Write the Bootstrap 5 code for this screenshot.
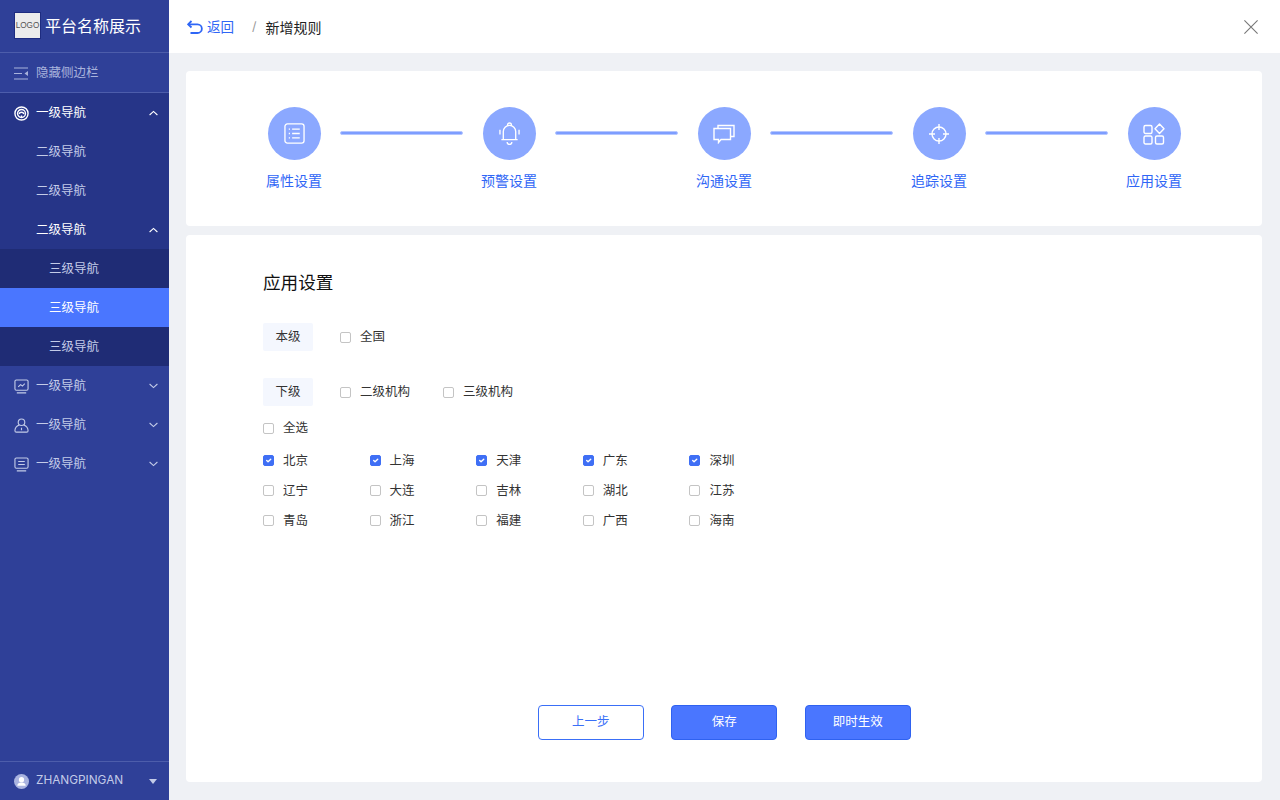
<!DOCTYPE html>
<html lang="zh">
<head>
  <meta charset="UTF-8">
  <meta name="viewport" content="width=device-width, initial-scale=1.0">
  <title>新增规则</title>
  <link href="https://cdn.jsdelivr.net/npm/bootstrap@5.3.3/dist/css/bootstrap.min.css" rel="stylesheet">
  <script src="https://cdn.jsdelivr.net/npm/bootstrap@5.3.3/dist/js/bootstrap.bundle.min.js"></script>
  <style>
    html, body { height: 100%; overflow: hidden; }
    body { font-family: "Inter", "Noto Sans CJK SC", sans-serif; font-size: 12.5px; background: #eff1f5; color: #222; }
    svg { display: block; flex: none; }

    .side { width: 169px; flex: none; background: #2f4098; color: #c3cbe8; }
    .side-logo { height: 53px; padding: 0 0 1px 14px; gap: 4px; border-bottom: 1px solid #4d5dab; color: #fff; font-size: 16px; }
    .logo-box { width: 27px; height: 27px; background: #ececec; border: 1px solid #1e2c80; color: #555; font-size: 8.2px; line-height: 25px; text-align: center; font-family: "Liberation Sans", sans-serif; }
    .side-toggle { height: 40px; padding: 1px 0 0 14px; gap: 8px; border-bottom: 1px solid #4d5dab; color: #a9b3dc; }
    .side-row { height: 39px; padding: 1px 11px 0 14px; gap: 7px; color: #c3cbe8; }
    .side-open { background: #263588; }
    .side-row.top-open, .side-row.sub-open { color: #fff; }
    .lvl2 { padding-left: 36px; }
    .lvl3 { padding-left: 49px; background: #1f2c75; }
    .lvl3.on { background: #4a76ff; color: #fff; }
    .side-foot { height: 39px; padding: 0 12px 0 14px; gap: 7px; border-top: 1px solid #4d5dab; color: #c3cbe8; font-size: 11.8px; }
    .foot-caret { width: 0; height: 0; border-left: 4.5px solid transparent; border-right: 4.5px solid transparent; border-top: 5px solid #c3cbe8; }

    .topbar { height: 53px; flex: none; background: #fff; padding: 1px 22px 0 18px; }
    .back-link { color: #2f66f6; font-size: 13.5px; gap: 4px; text-decoration: none; }
    .crumb-sep { color: #999; margin: 0 9px 0 18px; }
    .crumb-now { font-size: 14px; color: #222; }

    .content { padding: 18px 18px 18px 17px; gap: 9px; min-height: 0; }
    .panel { background: #fff; border-radius: 4px; }
    .steps { height: 155px; flex: none; padding: 36px 0 0 80px; }
    .step { width: 56px; flex: none; color: #2f66f6; font-size: 14px; line-height: 20px; }
    .step-dot { width: 53px; height: 53px; border-radius: 50%; background: #8ba8ff; margin-bottom: 11px; }
    .step-line { width: 123px; height: 4px; margin: 24px 18px 0; flex: none; border-radius: 2px; background: #7d9dff; border: 1px solid #b4c6ff; }

    .form-panel { padding: 36px 0 42px 77px; min-height: 0; }
    .form-title { font-size: 17.6px; line-height: 24px; font-weight: 400; margin: 0 0 28px; color: #111; }
    .scope-tag { width: 50px; height: 28px; line-height: 28px; text-align: center; background: #f4f7fe; border-radius: 2px; margin-right: 27px; color: #333; }
    .scope-row { height: 28px; margin-bottom: 27px; }
    .scope-row.last { margin-bottom: 9px; }
    .pick { display: flex; align-items: center; gap: 9px; margin: 0; line-height: 18px; color: #333; }
    .pick .form-check-input { width: 11px; height: 11px; margin: 0; border: 1px solid #c4c4c4; border-radius: 2px; flex: none; }
    .pick .form-check-input:checked { background-color: #3f6ff5; border-color: #3f6ff5; }
    .pick-gap { margin-right: 33px; }
    .all-row { height: 26px; margin-bottom: 4.5px; }
    .city-grid { display: grid; grid-template-columns: repeat(5, 106.6px); grid-auto-rows: 30px; align-items: center; }
    .btn-row { gap: 27.5px; margin: auto 0 0 -76.4px; justify-content: center; }
    .act { width: 106px; height: 35px; padding: 0; font-size: 12.5px; border-radius: 4px; }
    .btn-primary.act { background: #4a76ff; border-color: #2f62f0; color: #fff; }
    .btn-outline-primary.act { background: #fff; border-color: #3a6ff7; color: #3a6ff7; }
  </style>
</head>
<body>
  <div class="d-flex h-100">
    <!-- sidebar -->
    <aside class="side d-flex flex-column">
      <div class="side-logo d-flex align-items-center">
        <div class="logo-box">LOGO</div>
        <span>平台名称展示</span>
      </div>
      <div class="side-toggle d-flex align-items-center">
        <svg width="14" height="13" viewBox="0 0 14 13" fill="none" stroke="currentColor" stroke-width="1.2"><path d="M0 1h14M0 6.500h8M0 12h14"/><path d="M14 4v5l-3.500-2.500z" fill="currentColor" stroke="none"/></svg>
        <span>隐藏侧边栏</span>
      </div>
      <div class="side-open">
        <div class="side-row top-open d-flex align-items-center">
          <svg width="15" height="15" viewBox="0 0 16 16" fill="none" stroke="#fff" stroke-width="1.5"><circle cx="8" cy="8" r="7"/><circle cx="8" cy="8" r="4.200"/><path d="M5.500 8.500a2.600 2.600 0 0 1 5 0M8 12v-2"/></svg>
          <span class="flex-grow-1">一级导航</span>
          <svg width="9" height="6" viewBox="0 0 9 6" fill="none" stroke="#fff" stroke-width="1.100"><path d="M.6 5l3.900-3.600L8.400 5"/></svg>
        </div>
        <div class="side-row lvl2 d-flex align-items-center">二级导航</div>
        <div class="side-row lvl2 d-flex align-items-center">二级导航</div>
        <div class="side-row lvl2 sub-open d-flex align-items-center">
          <span class="flex-grow-1">二级导航</span>
          <svg width="9" height="6" viewBox="0 0 9 6" fill="none" stroke="#fff" stroke-width="1.100"><path d="M.6 5l3.900-3.600L8.400 5"/></svg>
        </div>
        <div class="side-row lvl3 d-flex align-items-center">三级导航</div>
        <div class="side-row lvl3 on d-flex align-items-center">三级导航</div>
        <div class="side-row lvl3 d-flex align-items-center">三级导航</div>
      </div>
      <div class="side-row d-flex align-items-center">
        <svg width="15" height="15" viewBox="0 0 16 16" fill="none" stroke="currentColor" stroke-width="1.200"><rect x="1" y="1" width="14" height="11" rx="1.500"/><path d="M4.500 8.500l2.500-2.500 2 1.500 2.500-2.500M3 14.800h10"/></svg>
        <span class="flex-grow-1">一级导航</span>
        <svg width="9" height="6" viewBox="0 0 9 6" fill="none" stroke="currentColor" stroke-width="1.100"><path d="M.6 1l3.900 3.600L8.400 1"/></svg>
      </div>
      <div class="side-row d-flex align-items-center">
        <svg width="15" height="15" viewBox="0 0 16 16" fill="none" stroke="currentColor" stroke-width="1.200"><circle cx="8" cy="4.500" r="3.500"/><path d="M5.500 7.500C3 8.500 1 11 1 13.500c0 1 .6 1.500 1.500 1.500h11c.9 0 1.500-.5 1.500-1.500 0-2.500-2-5-4.500-6M8 10.500V13"/></svg>
        <span class="flex-grow-1">一级导航</span>
        <svg width="9" height="6" viewBox="0 0 9 6" fill="none" stroke="currentColor" stroke-width="1.100"><path d="M.6 1l3.900 3.600L8.400 1"/></svg>
      </div>
      <div class="side-row d-flex align-items-center">
        <svg width="15" height="15" viewBox="0 0 16 16" fill="none" stroke="currentColor" stroke-width="1.200"><rect x="1" y="1" width="14" height="11" rx="1.500"/><path d="M4.500 4.800h7M4.500 8h7M3 14.800h10"/></svg>
        <span class="flex-grow-1">一级导航</span>
        <svg width="9" height="6" viewBox="0 0 9 6" fill="none" stroke="currentColor" stroke-width="1.100"><path d="M.6 1l3.900 3.600L8.400 1"/></svg>
      </div>
      <div class="side-foot d-flex align-items-center mt-auto">
        <svg width="15" height="15" viewBox="0 0 16 16"><circle cx="8" cy="8" r="8" fill="#aab4e0"/><circle cx="8" cy="6" r="2.800" fill="#fff"/><path d="M3.500 12.500c0-2.500 2-3.500 4.500-3.500s4.500 1 4.500 3.500z" fill="#fff"/></svg>
        <span class="flex-grow-1">ZHANGPINGAN</span>
        <span class="foot-caret"></span>
      </div>
    </aside>

    <!-- main -->
    <main class="flex-grow-1 d-flex flex-column" style="min-width:0">
      <header class="topbar d-flex align-items-center">
        <a class="back-link d-flex align-items-center" href="#">
          <svg width="16" height="15" viewBox="0 0 16 15" fill="none" stroke="#2f66f6" stroke-width="1.800"><path d="M4.500 1L1.200 4.300l3.300 3.200"/><path d="M1.500 4.300h9a4.300 4.300 0 0 1 0 8.700H3.500"/></svg>
          <span>返回</span>
        </a>
        <span class="crumb-sep">/</span>
        <span class="crumb-now flex-grow-1">新增规则</span>
        <svg width="14" height="14" viewBox="0 0 14 14" fill="none" stroke="#777" stroke-width="1.100"><path d="M.4.400l13.200 13.200M13.600.400L.4 13.600"/></svg>
      </header>

      <div class="content flex-grow-1 d-flex flex-column">
        <section class="panel steps d-flex align-items-start">
          <div class="step d-flex flex-column align-items-center text-nowrap">
            <div class="step-dot d-flex align-items-center justify-content-center">
              <svg width="21" height="21" viewBox="0 0 22 22" fill="none" stroke="#fff" stroke-width="1.400"><rect x="1" y="1" width="20" height="20" rx="2.500"/><path d="M8.500 6.500h8M8.500 11h8M8.500 15.500h8M5 6.500h1.300M5 11h1.300M5 15.500h1.300"/></svg>
            </div>
            <span>属性设置</span>
          </div>
          <div class="step-line"></div>
          <div class="step d-flex flex-column align-items-center text-nowrap">
            <div class="step-dot d-flex align-items-center justify-content-center">
              <svg width="21" height="23" viewBox="0 0 22 24" fill="none" stroke="#fff" stroke-width="1.400"><path d="M4.500 18.500V10a6.500 6.500 0 0 1 13 0v8.500zM2.500 18.500h17M9 3.800V3a2 2 0 0 1 4 0v.8M8.500 21a2.500 2.500 0 0 0 5 0M1 8v5M21 8v5"/></svg>
            </div>
            <span>预警设置</span>
          </div>
          <div class="step-line"></div>
          <div class="step d-flex flex-column align-items-center text-nowrap">
            <div class="step-dot d-flex align-items-center justify-content-center">
              <svg width="22" height="20" viewBox="0 0 22 20" fill="none" stroke="#fff" stroke-width="1.400"><path d="M5 4V1.500h16v11h-3"/><path d="M1 4.500h16.500v11H8L5.500 18.500V15.500H1z"/></svg>
            </div>
            <span>沟通设置</span>
          </div>
          <div class="step-line"></div>
          <div class="step d-flex flex-column align-items-center text-nowrap">
            <div class="step-dot d-flex align-items-center justify-content-center">
              <svg width="22" height="22" viewBox="0 0 22 22" fill="none" stroke="#fff" stroke-width="1.400"><circle cx="11" cy="11" r="7"/><path d="M11 1v6M11 15v6M1 11h6M15 11h6"/></svg>
            </div>
            <span>追踪设置</span>
          </div>
          <div class="step-line"></div>
          <div class="step d-flex flex-column align-items-center text-nowrap">
            <div class="step-dot d-flex align-items-center justify-content-center">
              <svg width="22" height="22" viewBox="0 0 22 22" fill="none" stroke="#fff" stroke-width="1.400"><rect x="1" y="2.500" width="8" height="8" rx="1.500"/><rect x="1" y="13" width="8" height="8" rx="1.500"/><rect x="12.500" y="13" width="8" height="8" rx="1.500"/><path d="M16.500 1l4.500 4.700-4.500 4.700L12 5.700z" stroke-linejoin="round"/></svg>
            </div>
            <span>应用设置</span>
          </div>
        </section>

        <section class="panel form-panel flex-grow-1 d-flex flex-column">
          <h2 class="form-title">应用设置</h2>
          <div class="scope-row d-flex align-items-center">
            <span class="scope-tag">本级</span>
            <label class="pick"><input class="form-check-input" type="checkbox">全国</label>
          </div>
          <div class="scope-row last d-flex align-items-center">
            <span class="scope-tag">下级</span>
            <label class="pick pick-gap"><input class="form-check-input" type="checkbox">二级机构</label>
            <label class="pick"><input class="form-check-input" type="checkbox">三级机构</label>
          </div>
          <div class="all-row d-flex align-items-center">
            <label class="pick"><input class="form-check-input" type="checkbox">全选</label>
          </div>
          <div class="city-grid">
            <label class="pick"><input class="form-check-input" type="checkbox" checked>北京</label>
            <label class="pick"><input class="form-check-input" type="checkbox" checked>上海</label>
            <label class="pick"><input class="form-check-input" type="checkbox" checked>天津</label>
            <label class="pick"><input class="form-check-input" type="checkbox" checked>广东</label>
            <label class="pick"><input class="form-check-input" type="checkbox" checked>深圳</label>
            <label class="pick"><input class="form-check-input" type="checkbox">辽宁</label>
            <label class="pick"><input class="form-check-input" type="checkbox">大连</label>
            <label class="pick"><input class="form-check-input" type="checkbox">吉林</label>
            <label class="pick"><input class="form-check-input" type="checkbox">湖北</label>
            <label class="pick"><input class="form-check-input" type="checkbox">江苏</label>
            <label class="pick"><input class="form-check-input" type="checkbox">青岛</label>
            <label class="pick"><input class="form-check-input" type="checkbox">浙江</label>
            <label class="pick"><input class="form-check-input" type="checkbox">福建</label>
            <label class="pick"><input class="form-check-input" type="checkbox">广西</label>
            <label class="pick"><input class="form-check-input" type="checkbox">海南</label>
          </div>
          <div class="btn-row d-flex">
            <button type="button" class="btn btn-outline-primary act">上一步</button>
            <button type="button" class="btn btn-primary act">保存</button>
            <button type="button" class="btn btn-primary act">即时生效</button>
          </div>
        </section>
      </div>
    </main>
  </div>
</body>
</html>
